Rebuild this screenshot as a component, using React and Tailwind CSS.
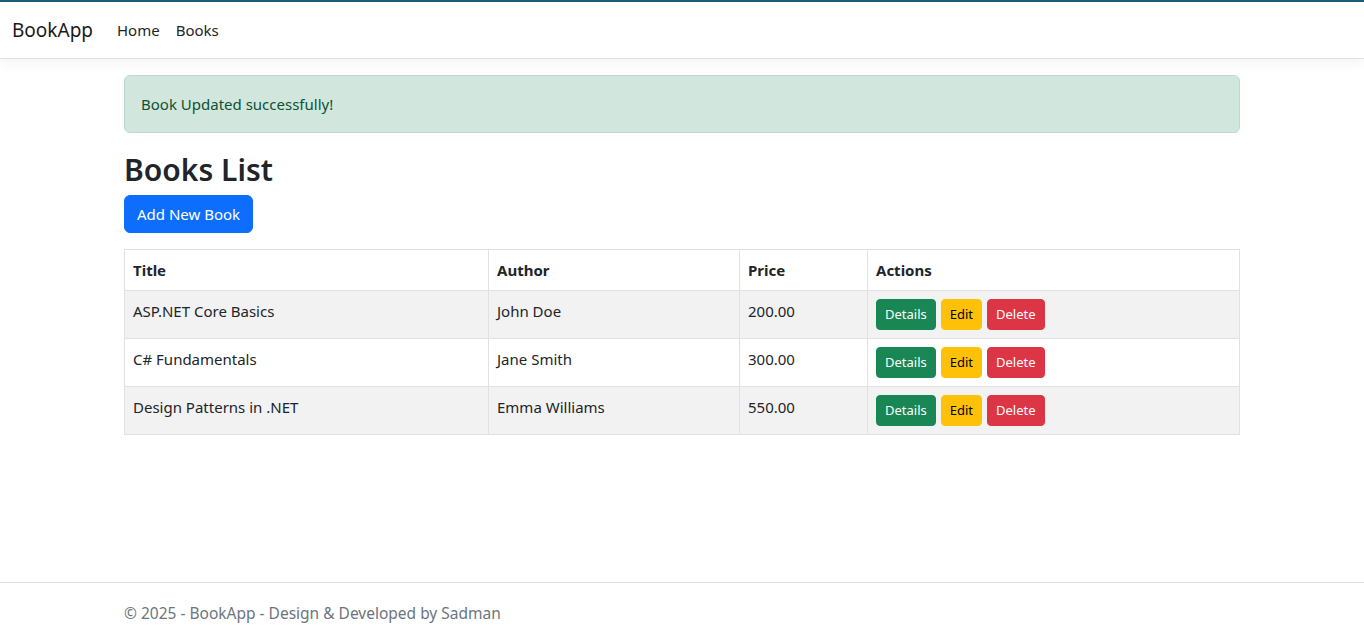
import React from "react";

const books = [
  { title: "ASP.NET Core Basics", author: "John Doe", price: "200.00" },
  { title: "C# Fundamentals", author: "Jane Smith", price: "300.00" },
  { title: "Design Patterns in .NET", author: "Emma Williams", price: "550.00" },
];

export default function App() {
  return (
    <div
      className="min-h-screen flex flex-col bg-white text-[#212529] text-[15px] leading-[24px]"
      style={{ fontFamily: '"Noto Sans", "Open Sans", sans-serif' }}
    >
      <header className="border-t-2 border-t-[#1d5b79] border-b border-b-[#dee2e6] bg-white shadow-[0_4px_12px_rgba(0,0,0,0.05)] mb-4">
        <nav className="flex items-center px-3 py-2 h-[56px]">
          <span className="text-[19px] leading-[30px] py-[5px] mr-4 text-[#1a1a1a]">BookApp</span>
          <span className="px-2 py-2 text-[#212529]">Home</span>
          <span className="px-2 py-2 text-[#212529]">Books</span>
        </nav>
      </header>

      <main className="w-[1140px] mx-auto px-3 pb-6">
        <div className="bg-[#d1e7dd] border border-[#badbcc] text-[#0f5132] rounded-[6px] p-4 mb-4">
          Book Updated successfully!
        </div>
        <h2 className="text-[30px] leading-[38px] font-semibold pt-[2px] mb-[6px]">Books List</h2>
        <div className="mb-4">
          <button className="bg-[#0d6efd] text-white rounded-[6px] px-3 py-[6px] border border-[#0d6efd] leading-[24px]">
            Add New Book
          </button>
        </div>
        <table className="w-full border-collapse border border-[#dee2e6]">
          <thead>
            <tr>
              <th className="w-[364px] border border-[#dee2e6] p-2 text-left font-bold">Title</th>
              <th className="w-[251px] border border-[#dee2e6] p-2 text-left font-bold">Author</th>
              <th className="w-[128px] border border-[#dee2e6] p-2 text-left font-bold">Price</th>
              <th className="border border-[#dee2e6] p-2 text-left font-bold">Actions</th>
            </tr>
          </thead>
          <tbody>
            {books.map((b, i) => (
              <tr key={b.title} className={i % 2 === 0 ? "bg-[#f2f2f2]" : "bg-white"}>
                <td className="border border-[#dee2e6] p-2 align-top">{b.title}</td>
                <td className="border border-[#dee2e6] p-2 align-top">{b.author}</td>
                <td className="border border-[#dee2e6] p-2 align-top">{b.price}</td>
                <td className="border border-[#dee2e6] p-2 align-top">
                  <div className="flex gap-[5px]">
                    <button className="bg-[#198754] text-white text-[13px] leading-[21px] px-2 py-1 rounded-[4px] border border-[#198754]">
                      Details
                    </button>
                    <button className="bg-[#ffc107] text-black text-[13px] leading-[21px] px-2 py-1 rounded-[4px] border border-[#ffc107]">
                      Edit
                    </button>
                    <button className="bg-[#dc3545] text-white text-[13px] leading-[21px] px-2 py-1 rounded-[4px] border border-[#dc3545]">
                      Delete
                    </button>
                  </div>
                </td>
              </tr>
            ))}
          </tbody>
        </table>
      </main>

      <footer className="mt-auto border-t border-[#dee2e6] h-[61px] text-[#6c757d]">
        <div className="w-[1140px] mx-auto px-3 text-[15.5px] leading-[60px] whitespace-nowrap">
          © 2025 - BookApp - Design &amp; Developed by Sadman
        </div>
      </footer>
    </div>
  );
}
